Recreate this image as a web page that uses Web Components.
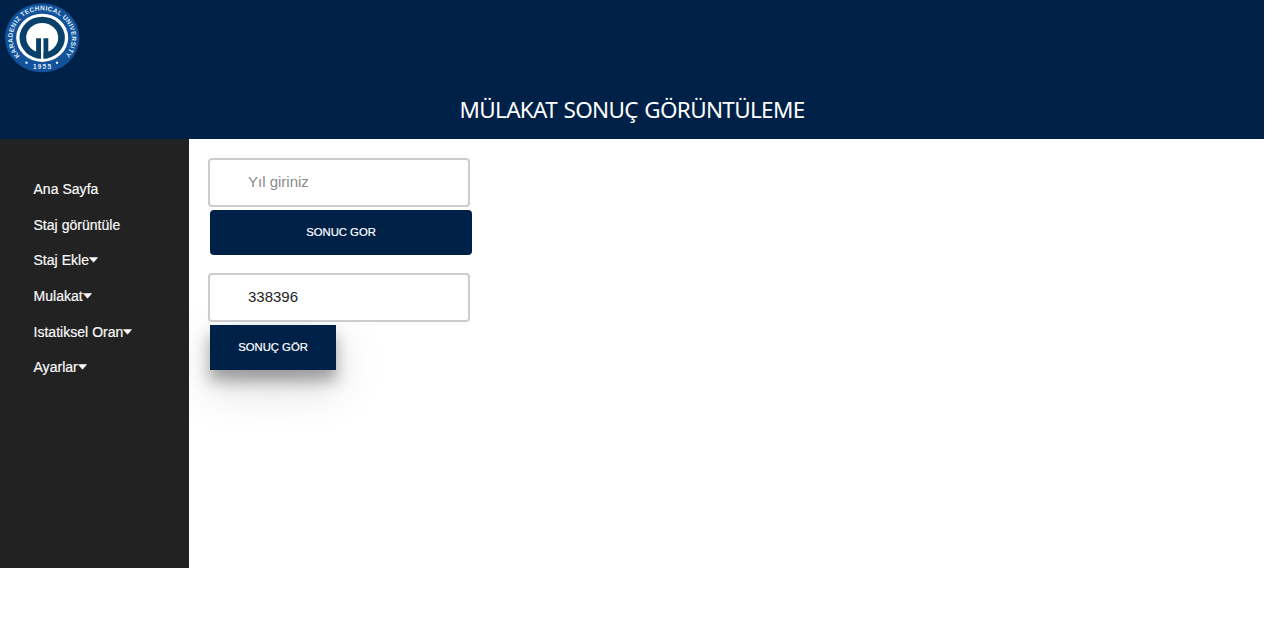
<!DOCTYPE html>
<html lang="tr">
<head>
<meta charset="utf-8">
<title>Mülakat Sonuç Görüntüleme</title>
<style>
body{margin:0;background:#fff;font-family:"Liberation Sans",Arial,sans-serif}
</style>
</head>
<body>
<interview-page></interview-page>
<script>
const define = (name, html, setup) => customElements.define(name, class extends HTMLElement {
  connectedCallback() {
    if (this.shadowRoot) return;
    const root = this.attachShadow({mode: 'open'});
    root.innerHTML = html;
    if (setup) setup(this, root);
  }
});

define('ktu-logo', `
<style>:host{display:block;width:84px;height:76px}svg{display:block}text{font-family:"Liberation Sans",sans-serif;font-weight:700;fill:#dfebf7}</style>
<svg width="84" height="76" viewBox="0 0 84 76">
  <defs><path id="arc" d="M20 56A29.500 27.500 0 1 1 64.400 56L60 60"/></defs>
  <g transform="translate(42.2 37.8) scale(1 .927) translate(-42.4 -38)">
    <circle cx="42.400" cy="38" r="37.2" fill="#12529b"/>
    <circle cx="42.400" cy="38" r="26" fill="#fff"/>
    <circle cx="42.400" cy="38" r="22.700" fill="#08406a"/>
    <circle cx="42.400" cy="38" r="16" fill="#fff"/>
    <path d="M36.300 38.500H41.300V60H36.300ZM43.500 38.500H48.500V60H43.500Z" fill="#08406a"/>
    <path d="M41.300 38H43.500V61H41.300Z" fill="#fff"/>
  </g>
  <text font-size="6.600"><textPath href="#arc" textLength="128">KARADENIZ TECHNICAL UNIVERSITY</textPath></text>
  <text x="42" y="68.500" font-size="6.500" text-anchor="middle" textLength="18">1955</text>
  <circle cx="26.500" cy="62.800" r="1.200" fill="#dfebf7"/><circle cx="57" cy="62.800" r="1.200" fill="#dfebf7"/>
</svg>`);

define('page-header', `
<style>
:host{display:flex;flex-direction:column;box-sizing:border-box;width:1264px;height:139px;background:#002147}
h1{margin:18px 0 0;font:400 22.500px/32px "Noto Sans",sans-serif;letter-spacing:-.68px;word-spacing:1.300px;color:#fff;text-align:center}
</style>
<ktu-logo></ktu-logo><h1><slot></slot></h1>`);

define('nav-item', `
<style>
:host{display:flex;align-items:center;height:35.600px;font-size:14px;letter-spacing:.03px;color:#f8f8f8;-webkit-text-stroke:.2px #f8f8f8;white-space:nowrap}
svg{display:none;width:9px;height:6px}
:host([menu]) svg{display:block}
</style>
<span><slot></slot></span><svg viewBox="0 0 9 6"><path d="M.3 .5H8.700L4.500 5.300Z" fill="#fff" stroke="#fff" stroke-width=".5" stroke-linejoin="round"/></svg>`);

define('side-nav', `
<style>
:host{display:block;box-sizing:border-box;width:189px;height:429px;padding:32.500px 0 0 33.500px;background:#222}
</style><slot></slot>`);

define('text-field', `
<style>
:host{display:block}
input{display:block;box-sizing:border-box;width:262px;height:49px;margin:0;padding:0 10px 2px 38px;border:2px solid #ccc;border-radius:4px;background:#fff;color:#222;font:15px "Liberation Sans",Arial,sans-serif;outline:0}
input::placeholder{color:#8a8a8a;opacity:1}
</style><input type="text">`, (el, root) => {
  const input = root.querySelector('input');
  input.placeholder = el.getAttribute('placeholder') || '';
  input.value = el.getAttribute('value') || '';
});

define('action-button', `
<style>
:host{display:block;margin:3px 0 0 2px}
button{display:block;width:262px;height:45px;margin:0;padding:0;border:0;border-radius:4px;background:#002147;color:#fff;font:11.300px "Liberation Sans",Arial,sans-serif;-webkit-text-stroke:.2px #fff}
:host([raised]) button{width:126px;border-radius:0;box-shadow:0 11px 15px rgba(0,0,0,.32),0 16px 47px rgba(0,0,0,.17)}
</style><button><slot></slot></button>`);

define('interview-page', `
<style>
:host{display:block}
.body{display:flex}
side-nav{position:relative;z-index:1}
text-field{position:relative;z-index:1}
main{display:flex;flex-direction:column;gap:18px;padding:18.500px 0 0 19px}
</style>
<page-header>MÜLAKAT SONUÇ GÖRÜNTÜLEME</page-header>
<div class="body">
  <side-nav>
    <nav-item>Ana Sayfa</nav-item><nav-item>Staj görüntüle</nav-item><nav-item menu>Staj Ekle</nav-item><nav-item menu>Mulakat</nav-item><nav-item menu>Istatiksel Oran</nav-item><nav-item menu>Ayarlar</nav-item>
  </side-nav>
  <main>
    <section><text-field placeholder="Yıl giriniz"></text-field><action-button>SONUC GOR</action-button></section>
    <section><text-field value="338396"></text-field><action-button raised>SONUÇ GÖR</action-button></section>
  </main>
</div>`);
</script>
</body>
</html>
